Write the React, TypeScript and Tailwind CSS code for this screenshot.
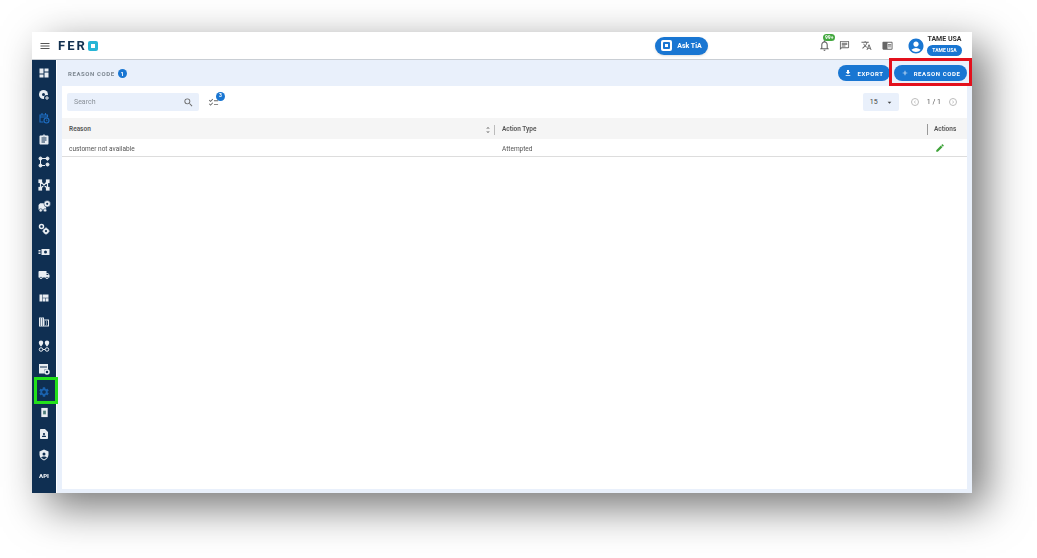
import { ReactNode } from "react";
import {
  MdMenu,
  MdDashboard,
  MdAssignment,
  MdLocalShipping,
  MdViewQuilt,
  MdDomain,
  MdSettings,
  MdContactPage,
  MdOutlineNotifications,
  MdOutlineChat,
  MdTranslate,
  MdChromeReaderMode,
  MdAccountCircle,
  MdFileDownload,
  MdAdd,
  MdSearch,
  MdChecklist,
  MdArrowDropDown,
  MdOutlineChevronLeft,
  MdOutlineChevronRight,
  MdUnfoldMore,
  MdEdit,
} from "react-icons/md";

const NAVY = "#0f2f52";

function GlobeAdd() {
  return (
    <svg viewBox="0 0 24 24" className="h-[12px] w-[12px]" fill="#e8edf2">
      <circle cx="11" cy="11" r="9" />
      <circle cx="11" cy="11" r="3" fill={NAVY} />
      <circle cx="18" cy="18" r="6" fill={NAVY} />
      <path d="M17 14h2v3h3v2h-3v3h-2v-3h-3v-2h3z" />
    </svg>
  );
}

function CalendarClock() {
  return (
    <svg viewBox="0 0 24 24" className="h-[12px] w-[12px]" fill="none" stroke="#1f6fc4" strokeWidth="2.2">
      <path d="M11 20H4V6h15v5M8 2v5M15 2v5M4 10h15" />
      <circle cx="17" cy="17" r="5" />
      <path d="M17 15v2.5h2" strokeWidth="1.5" />
    </svg>
  );
}

function RouteIcon() {
  return (
    <svg viewBox="0 0 24 24" className="h-[12px] w-[12px]" fill="#e8edf2" stroke="#e8edf2" strokeWidth="2">
      <path d="M5 5h14M5 5v14M19 5v4M5 19h9" fill="none" />
      <circle cx="5" cy="5" r="3" />
      <circle cx="19" cy="5" r="3" />
      <circle cx="5" cy="19" r="3" />
      <circle cx="19" cy="17" r="3" />
    </svg>
  );
}

function NetworkIcon() {
  return (
    <svg viewBox="0 0 24 24" className="h-[12px] w-[12px]" fill="#e8edf2" stroke="#e8edf2" strokeWidth="2.4">
      <path d="M5 5l14 14M19 5L5 19M5 5v14M19 5v14" fill="none" />
      <rect x="2" y="2" width="5" height="5" />
      <rect x="17" y="2" width="5" height="5" />
      <rect x="2" y="17" width="5" height="5" />
      <rect x="17" y="17" width="5" height="5" />
    </svg>
  );
}

function VehicleGear() {
  return (
    <svg viewBox="0 0 24 24" className="h-[13px] w-[13px]" fill="#e8edf2">
      <path d="M1 9l3-3h8v3h3v9H1z" />
      <circle cx="5" cy="19" r="3" stroke={NAVY} />
      <circle cx="13" cy="19" r="3" stroke={NAVY} />
      <circle cx="17" cy="7" r="6" stroke={NAVY} />
      <circle cx="17" cy="7" r="2" fill={NAVY} />
    </svg>
  );
}

function TwoGears() {
  return (
    <svg viewBox="0 0 24 24" className="h-[12px] w-[12px]" fill="none" stroke="#e8edf2">
      <circle cx="7" cy="7" r="4" strokeWidth="3" />
      <circle cx="16" cy="16" r="4" strokeWidth="3.5" />
      <path d="M16 9v3M16 20v3M9 16h3M20 16h3" strokeWidth="2.5" />
    </svg>
  );
}

function CashIcon() {
  return (
    <svg viewBox="0 0 24 24" className="h-[12px] w-[12px]" fill="#e8edf2">
      <path d="M7 6h16v12H7z" />
      <circle cx="15" cy="12" r="3" fill={NAVY} />
      <path d="M1 8h4v2H1zM1 11h4v2H1zM1 14h4v2H1z" />
    </svg>
  );
}

function PinsIcon() {
  return (
    <svg viewBox="0 0 24 24" className="h-[12px] w-[12px]" fill="#e8edf2">
      <path d="M6 1a4.500 4.500 0 0 1 4.500 4.500C10.500 9 6 13 6 13S1.500 9 1.500 5.500A4.500 4.500 0 0 1 6 1zM18 1a4.500 4.500 0 0 1 4.500 4.500C22.500 9 18 13 18 13s-4.500-4-4.500-7.500A4.500 4.500 0 0 1 18 1z" />
      <circle cx="6" cy="19" r="3.500" fill="none" stroke="#e8edf2" strokeWidth="2" />
      <circle cx="18" cy="19" r="3.500" fill="none" stroke="#e8edf2" strokeWidth="2" />
      <path d="M10 19h4" stroke="#e8edf2" strokeWidth="2" />
    </svg>
  );
}

function NoteGear() {
  return (
    <svg viewBox="0 0 24 24" className="h-[12px] w-[12px]" fill="#e8edf2">
      <path d="M2 2h18v11h-7v8H2z" />
      <path d="M4 7h14v2H4z" fill={NAVY} />
      <circle cx="18" cy="18" r="4" fill="none" stroke="#e8edf2" strokeWidth="3" />
    </svg>
  );
}

function BinBox() {
  return (
    <svg viewBox="0 0 24 24" className="h-[11px] w-[11px]" fill="#e8edf2">
      <path d="M5 2h14v20H5z" />
      <path d="M9 8h6v8H9z" fill="#4d7c7a" />
    </svg>
  );
}

function ShieldUser() {
  return (
    <svg viewBox="0 0 24 24" className="h-[12px] w-[12px]" fill="#e8edf2">
      <path d="M12 1l9 4v6c0 6-4 10-9 12-5-2-9-6-9-12V5z" />
      <circle cx="12" cy="10" r="3" fill={NAVY} />
      <path d="M6 17c2-3 10-3 12 0l-6 4z" fill={NAVY} />
    </svg>
  );
}

const sideIcons: { node: ReactNode; h: string }[] = [
  { node: <MdDashboard className="text-[12px] text-[#e8edf2]" />, h: "h-[22.3px]" },
  { node: <GlobeAdd />, h: "h-[22.3px]" },
  { node: <CalendarClock />, h: "h-[22.3px]" },
  { node: <MdAssignment className="text-[12px] text-[#e8edf2]" />, h: "h-[22.3px]" },
  { node: <RouteIcon />, h: "h-[22.3px]" },
  { node: <NetworkIcon />, h: "h-[22.3px]" },
  { node: <VehicleGear />, h: "h-[22.3px]" },
  { node: <TwoGears />, h: "h-[22.3px]" },
  { node: <CashIcon />, h: "h-[22.3px]" },
  { node: <MdLocalShipping className="text-[12px] text-[#e8edf2]" />, h: "h-[23.7px]" },
  { node: <MdViewQuilt className="text-[12px] text-[#e8edf2]" />, h: "h-[23.7px]" },
  { node: <MdDomain className="text-[12px] text-[#e8edf2]" />, h: "h-[23.7px]" },
  { node: <PinsIcon />, h: "h-[23.7px]" },
  { node: <NoteGear />, h: "h-[23.7px]" },
  { node: <MdSettings className="text-[12px] text-[#1a62ad]" />, h: "h-[21.2px]" },
  { node: <BinBox />, h: "h-[21.2px]" },
  { node: <MdContactPage className="text-[12px] text-[#e8edf2]" />, h: "h-[21.2px]" },
  { node: <ShieldUser />, h: "h-[21.2px]" },
  { node: <span className="text-[6px] font-black leading-none text-[#e8edf2]">API</span>, h: "h-[21.2px]" },
];

function TopBar() {
  return (
    <div className="flex h-[28px] shrink-0 items-center border-b border-[#c9ced4] bg-white pl-[7px] pr-[10px]">
      <MdMenu className="text-[12px] text-[#555]" />
      <div className="ml-[7px] flex w-[40px] items-center justify-between">
        <span className="text-[13px] font-bold leading-none tracking-[2px] text-[#12304f]">FER</span>
        <span className="flex h-[10px] w-[10px] items-center justify-center rounded-[2px] bg-[#27b5d6]">
          <span className="h-[4px] w-[4px] bg-white" />
        </span>
      </div>
      <button className="ml-[557px] flex h-[18px] w-[53px] items-center justify-center gap-[5px] rounded-full bg-[#1976d2] text-[7px] font-bold text-white shadow-sm">
        <span className="flex h-[11px] w-[11px] items-center justify-center rounded-[2px] bg-white">
          <span className="flex h-[7px] w-[7px] items-center justify-center rounded-[1px] bg-[#1976d2]">
            <span className="h-[3px] w-[3px] bg-white" />
          </span>
        </span>
        <span className="mt-[1px]">Ask TiA</span>
      </button>
      <div className="ml-[110px] flex items-center">
        <span className="relative">
          <MdOutlineNotifications className="text-[13px] text-[#666]" />
          <span className="absolute -top-[5px] left-[5px] rounded-full bg-[#43a83f] px-[2px] text-[5px] font-bold leading-[7px] text-white">
            99+
          </span>
        </span>
        <MdOutlineChat className="ml-[8px] text-[11px] text-[#666]" />
        <MdTranslate className="ml-[11px] text-[11px] text-[#666]" />
        <MdChromeReaderMode className="ml-[10px] text-[11px] text-[#666]" />
        <MdAccountCircle className="ml-[14px] text-[18px] text-[#1976d2]" />
        <div className="ml-[2px] flex w-[35px] flex-col items-center">
          <span className="text-[7px] font-bold leading-[9px] text-[#333]">TAME USA</span>
          <span className="mt-[1px] w-full rounded-full bg-[#1976d2] text-center text-[5px] font-bold leading-[11px] text-white">
            TAME USA
          </span>
        </div>
      </div>
    </div>
  );
}

function Sidebar() {
  return (
    <div className="flex w-[24px] shrink-0 flex-col bg-[#0f2f52] pt-[2px]">
      {sideIcons.map((item, i) => (
        <div key={i} className={`flex items-center justify-center ${item.h}`}>
          {item.node}
        </div>
      ))}
    </div>
  );
}

function PillButton({ icon, label, width }: { icon: ReactNode; label: string; width: string }) {
  return (
    <button className={`flex h-[16px] items-center justify-center gap-[5px] rounded-full bg-[#1976d2] text-[6px] font-bold tracking-[0.6px] text-white ${width}`}>
      {icon}
      {label}
    </button>
  );
}

function ReasonTable() {
  return (
    <div className="text-[6.5px] text-[#555]">
      <div className="flex h-[21px] items-center bg-[#f5f5f5] pt-[2px] font-semibold">
        <div className="flex flex-1 items-center pl-[7px]">
          <span className="flex-1">Reason</span>
          <MdUnfoldMore className="text-[8px] text-[#666]" />
          <span className="ml-[2px] h-[10px] w-px bg-[#bbb]" />
        </div>
        <div className="w-[432px] pl-[7px]">Action Type</div>
        <div className="flex h-[11px] w-[40px] items-center border-l border-[#999] pl-[6px]">Actions</div>
      </div>
      <div className="flex h-[18px] items-center border-b border-[#ddd] pt-[4px]">
        <div className="flex-1 pl-[7px]">customer not available</div>
        <div className="w-[432px] pl-[7px]">Attempted</div>
        <div className="flex w-[40px] pl-[8px]">
          <MdEdit className="-mt-[3px] text-[10px] text-[#3fa33a]" />
        </div>
      </div>
    </div>
  );
}

function Content() {
  return (
    <div className="ml-px flex min-w-0 flex-1 flex-col bg-[#e9f0fb] px-[5px] pb-[4px]">
      <div className="flex h-[26px] shrink-0 items-center">
        <span className="ml-[6px] text-[6px] font-bold tracking-[0.6px] text-[#7d8791]">REASON CODE</span>
        <span className="ml-[3px] flex h-[9px] w-[9px] items-center justify-center rounded-full bg-[#1976d2] text-[6px] font-bold text-white">
          1
        </span>
        <div className="ml-auto flex items-center gap-[4px]">
          <PillButton icon={<MdFileDownload className="text-[8px]" />} label="EXPORT" width="w-[52px]" />
          <PillButton icon={<MdAdd className="text-[8px]" />} label="REASON CODE" width="w-[73px]" />
        </div>
      </div>
      <div className="flex flex-1 flex-col bg-white">
        <div className="flex h-[32px] items-center pl-[5px] pr-[10px]">
          <div className="flex h-[18px] w-[132px] items-center justify-between rounded-[2px] bg-[#e9f0fb] pl-[7px] pr-[5px]">
            <span className="text-[7px] text-[#8a9199]">Search</span>
            <MdSearch className="text-[11px] text-[#666]" />
          </div>
          <span className="relative ml-[9px]">
            <MdChecklist className="text-[11px] text-[#666]" />
            <span className="absolute -right-[6px] -top-[5px] flex h-[9px] w-[9px] items-center justify-center rounded-full bg-[#1976d2] text-[5px] font-bold text-white">
              3
            </span>
          </span>
          <div className="ml-auto flex items-center">
            <div className="flex h-[18px] w-[36px] items-center justify-between rounded-[2px] bg-[#e9f0fb] pl-[7px] pr-[5px] text-[7px] text-[#444]">
              15
              <MdArrowDropDown className="text-[9px]" />
            </div>
            <span className="ml-[12px] flex h-[8px] w-[8px] items-center justify-center rounded-full border border-[#bbb]">
              <MdOutlineChevronLeft className="text-[6px] text-[#aaa]" />
            </span>
            <span className="mx-[8px] text-[7px] text-[#555]">1 / 1</span>
            <span className="flex h-[8px] w-[8px] items-center justify-center rounded-full border border-[#bbb]">
              <MdOutlineChevronRight className="text-[6px] text-[#aaa]" />
            </span>
          </div>
        </div>
        <ReasonTable />
      </div>
    </div>
  );
}

export default function App() {
  return (
    <div className="h-[558px] w-[1037px] overflow-hidden bg-white pl-[32px] pt-[32px] font-['Roboto',sans-serif]">
      <div className="relative h-[461px] w-[940px] shadow-[14px_14px_40px_rgba(0,0,0,0.55)]">
        <div className="flex h-full flex-col blur-[0.5px]">
          <TopBar />
          <div className="flex min-h-0 flex-1">
            <Sidebar />
            <Content />
          </div>
        </div>
        <div className="absolute left-[2px] top-[345px] h-[27px] w-[24px] border-[3px] border-[#22e01a]" />
        <div className="absolute left-[857px] top-[26px] h-[28px] w-[83px] border-[3px] border-[#e3101c]" />
      </div>
    </div>
  );
}
